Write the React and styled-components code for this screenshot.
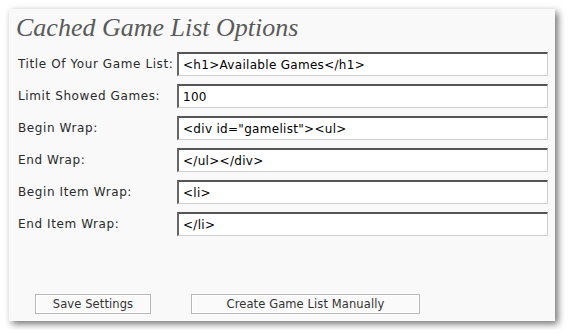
import React from 'react'
import styled, { createGlobalStyle } from 'styled-components';

const GlobalStyle = createGlobalStyle`
    body {
        margin: 0;
        background: #ffffff;
        font-family: "DejaVu Sans", Verdana, sans-serif;
    }
`;

const Page = styled.div`
    padding: 9px;
`;

const Panel = styled.div`
    box-sizing: border-box;
    width: 546px;
    height: 312px;
    background: #f9f9f9;
    box-shadow: 3px 3px 7px rgba(0, 0, 0, 0.55);
    padding: 4px 5px 7px 7px;
    display: flex;
    flex-direction: column;
`;

const Title = styled.h2`
    margin: 0 0 5px 0;
    font-family: "Liberation Serif", "Times New Roman", serif;
    font-style: italic;
    font-weight: normal;
    font-size: 26px;
    line-height: 30px;
    color: #5a5a5a;
`;

const Row = styled.div`
    display: flex;
    align-items: center;
    height: 32px;
`;

const Label = styled.label`
    width: 161px;
    padding-left: 2px;
    box-sizing: border-box;
    font-size: 12px;
    letter-spacing: 0.6px;
    color: #2a2a2a;
`;

const Field = styled.input`
    box-sizing: border-box;
    width: 371px;
    height: 24px;
    margin: 0;
    padding: 0 4px;
    background: #ffffff;
    border-style: solid;
    border-width: 2px 1px 1px 2px;
    border-color: #555555 #d0d0d0 #d0d0d0 #666666;
    font-family: "DejaVu Sans", Verdana, sans-serif;
    font-size: 12px;
    letter-spacing: 0.3px;
    color: #000000;
    outline: none;
`;

const Actions = styled.div`
    margin-top: auto;
    display: flex;
    gap: 40px;
    padding-left: 19px;
`;

const Button = styled.button`
    box-sizing: border-box;
    width: ${p => p.$w}px;
    height: 20px;
    margin: 0;
    padding: 0;
    background: #fafafa;
    border: 1px solid #b8b8b8;
    box-shadow: inset 0 0 0 1px #ffffff;
    font-family: "DejaVu Sans", Verdana, sans-serif;
    font-size: 11.5px;
    letter-spacing: 0.1px;
    color: #333333;
`;

const fields = [
    ['Title Of Your Game List:', '<h1>Available Games</h1>'],
    ['Limit Showed Games:', '100'],
    ['Begin Wrap:', '<div id="gamelist"><ul>'],
    ['End Wrap:', '</ul></div>'],
    ['Begin Item Wrap:', '<li>'],
    ['End Item Wrap:', '</li>'],
];

export default function App() {
    return (
        <Page>
            <GlobalStyle />
            <Panel>
                <Title>Cached Game List Options</Title>
                {fields.map(([label, value]) => (
                    <Row key={label}>
                        <Label>{label}</Label>
                        <Field type="text" defaultValue={value} />
                    </Row>
                ))}
                <Actions>
                    <Button $w={116}>Save Settings</Button>
                    <Button $w={229}>Create Game List Manually</Button>
                </Actions>
            </Panel>
        </Page>
    )
}
